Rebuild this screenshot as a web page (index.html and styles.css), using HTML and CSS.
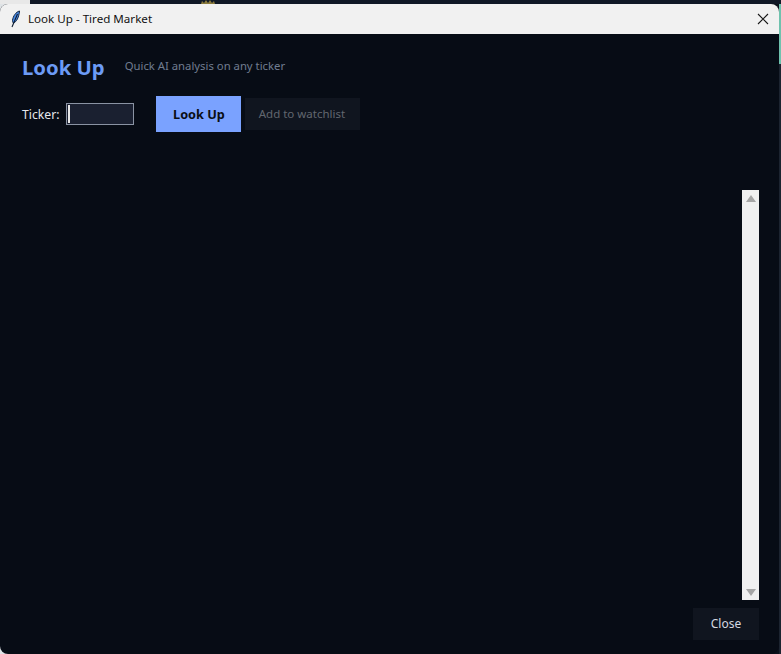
FILE: index.html
```html
<!DOCTYPE html>
<html lang="en">
<head>
<meta charset="utf-8">
<title>Look Up - Tired Market</title>
<link rel="stylesheet" href="styles.css">
</head>
<body>
<div class="desktop">
  <div class="backdrop-top">
    <div class="backdrop-light"></div>
    <svg class="crown" width="16" height="4" viewBox="0 0 16 4" aria-hidden="true"><path d="M1 4 L2 1 L4 3 L6 0 L8 3 L10 0 L12 3 L14 1 L15 4 Z" fill="#8a7a3c"/></svg>
  </div>
  <div class="backdrop-row">
    <div class="window">
      <div class="titlebar">
        <svg class="feather" width="14" height="18" viewBox="0 0 14 18" aria-hidden="true">
          <path d="M11.5 1 C8 2 5 6 4.5 10.5 C4.5 12 5 13 5.5 13 C8.5 12 11 7 11.5 1 Z" fill="#4a8be8" stroke="#10243f" stroke-width="1"/>
          <path d="M9.5 4 L4 17" stroke="#0d1b30" stroke-width="1.1" fill="none"/>
        </svg>
        <span class="title">Look Up - Tired Market</span>
        <svg class="close-x" width="12" height="12" viewBox="0 0 12 12" aria-hidden="true"><path d="M1 1 L11 11 M11 1 L1 11" stroke="#1a1a1a" stroke-width="1.1" fill="none"/></svg>
      </div>
      <div class="content">
        <div class="header">
          <h1 class="heading">Look Up</h1>
          <span class="subtitle">Quick AI analysis on any ticker</span>
        </div>
        <div class="controls">
          <label class="ticker-label" for="ticker">Ticker:</label>
          <div class="ticker-input" id="ticker"><span class="caret"></span></div>
          <div class="btn btn-primary">Look Up</div>
          <div class="btn btn-muted">Add to watchlist</div>
        </div>
        <div class="results">
          <div class="scrollbar">
            <span class="arrow arrow-up"></span>
            <span class="arrow arrow-down"></span>
          </div>
        </div>
        <div class="footer">
          <div class="btn btn-close">Close</div>
        </div>
      </div>
    </div>
    <div class="backdrop-edge"></div>
  </div>
</div>
</body>
</html>
```

FILE: styles.css
```css
* { box-sizing: border-box; }
html, body { margin: 0; padding: 0; height: 100%; }
body {
  background: #0b111b;
  font-family: "Noto Sans", "Open Sans", "Liberation Sans", sans-serif;
  overflow: hidden;
}
.desktop { width: 781px; height: 654px; display: flex; flex-direction: column; }
.backdrop-top { height: 4px; display: flex; background: #101826; flex: none; }
.backdrop-light { width: 30px; background: #e8e8e8; }
.crown { margin-left: 170px; }
.backdrop-row {
  flex: 1;
  display: flex;
  min-height: 0;
  background: linear-gradient(90deg, #dfe3e6 0 50%, #0b111b 50% 100%);
}
.backdrop-edge { width: 2px; background: linear-gradient(#6fc2ae 0 60px, #1c2430 60px 100%); }
.window {
  width: 779px;
  display: flex;
  flex-direction: column;
  border-radius: 8px;
  overflow: hidden;
  background: #070c15;
}
.titlebar {
  height: 30px;
  flex: none;
  background: #f1f1f1;
  display: flex;
  align-items: center;
  padding: 0 9px 0 8px;
}
.feather { flex: none; }
.title { margin-left: 6px; padding-bottom: 1px; font-size: 11.6px; color: #111; flex: 1; }
.close-x { flex: none; margin-right: 1px; }
.content {
  flex: 1;
  min-height: 0;
  display: flex;
  flex-direction: column;
  padding: 0 20px 14px 22px;
}
.header { display: flex; align-items: center; height: 62px; flex: none; padding-top: 5px; }
.heading { margin: 0; font-size: 20.3px; font-weight: 700; color: #6c9bf5; line-height: 1; }
.subtitle { margin-left: 20px; font-size: 11.3px; color: #707c90; margin-top: -4px; }
.controls { display: flex; align-items: center; height: 36px; flex: none; }
.ticker-label { font-size: 12.2px; color: #e6e8ec; }
.ticker-input {
  margin-left: 7px;
  width: 68px;
  height: 22px;
  background: #1a2030;
  border: 1px solid #8a93a3;
  display: flex;
  align-items: stretch;
  padding: 1px;
}
.caret { width: 2px; background: #e8e8e8; }
.btn { display: flex; align-items: center; justify-content: center; font-size: 12px; }
.btn-primary {
  margin-left: 22px;
  width: 85px;
  height: 36px;
  background: #7aa2ff;
  color: #0a0e14;
  font-size: 12.7px;
  font-weight: 700;
}
.btn-muted {
  margin-left: 4px;
  width: 115px;
  height: 32px;
  padding: 0 2px 2px 0;
  background: #10151f;
  color: #62676f;
  font-size: 11.5px;
}
.results {
  flex: 1;
  min-height: 0;
  display: flex;
  justify-content: flex-end;
  margin-top: 58px;
}
.scrollbar {
  width: 17px;
  background: #f0f0f0;
  display: flex;
  flex-direction: column;
  justify-content: space-between;
  align-items: center;
  padding: 5px 0 4px;
}
.arrow { width: 0; height: 0; border-left: 5px solid transparent; border-right: 5px solid transparent; }
.arrow-up { border-bottom: 7px solid #a6a6a6; }
.arrow-down { border-top: 7px solid #a6a6a6; }
.footer { display: flex; justify-content: flex-end; margin-top: 8px; flex: none; }
.btn-close { width: 66px; height: 32px; padding-bottom: 2px; background: #10151f; color: #d5d9e0; }
```
